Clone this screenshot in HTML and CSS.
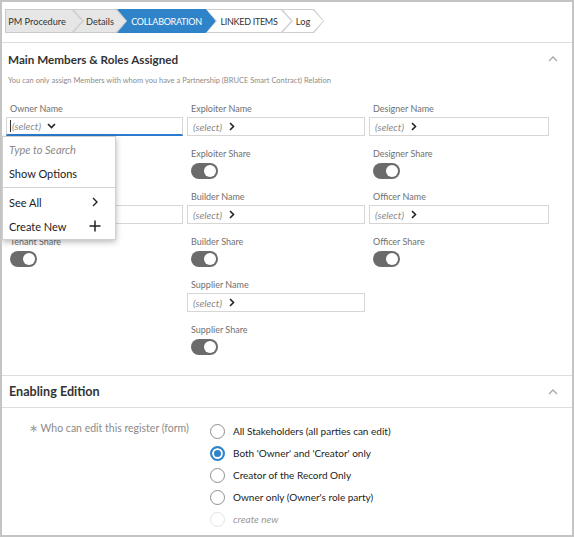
FILE: index.html
```html
<!DOCTYPE html>
<html>
<head>
<meta charset="utf-8">
<link rel="stylesheet" href="styles.css">
</head>
<body>
<div class="frame">
  <nav class="crumbs">
    <div class="crumb crumb-first crumb-done crumb-pm"><span class="crumb-in">PM Procedure</span></div>
    <div class="crumb crumb-done crumb-details"><span class="crumb-in">Details</span></div>
    <div class="crumb crumb-active crumb-collab"><span class="crumb-in crumb-caps">COLLABORATION</span></div>
    <div class="crumb crumb-todo crumb-linked"><span class="crumb-in crumb-caps">LINKED ITEMS</span></div>
    <div class="crumb crumb-todo crumb-log"><span class="crumb-in">Log</span></div>
  </nav>

  <section class="panel panel-members">
    <header class="panel-head head-members">
      <h2>Main Members &amp; Roles Assigned</h2>
      <svg class="collapse" width="10" height="6" viewBox="0 0 10 6"><polyline points="1,5 5,1 9,5" fill="none" stroke="#a8a8a8" stroke-width="1.3"/></svg>
    </header>
    <p class="hint">You can only assign Members with whom you have a Partnership (BRUCE Smart Contract) Relation</p>

    <div class="cols">
      <div class="col">
        <div class="field field-owner">
          <span class="lbl">Owner Name</span>
          <div class="select select-focus">
            <span class="caret"></span><span class="ph">(select)</span>
            <svg class="ico" width="9" height="6" viewBox="0 0 9 6"><polyline points="1,1 4.5,4.5 8,1" fill="none" stroke="#222" stroke-width="1.6"/></svg>
          </div>
          <div class="menu">
            <div class="menu-item menu-search">Type to Search</div>
            <div class="menu-item">Show Options</div>
            <div class="menu-sep"></div>
            <div class="menu-item">See All
              <svg width="12" height="10" viewBox="0 0 12 10"><polyline points="4,1 8,5 4,9" fill="none" stroke="#222" stroke-width="1.4"/></svg>
            </div>
            <div class="menu-item">Create New
              <svg width="12" height="12" viewBox="0 0 12 12"><path d="M6 0.5V11.5M0.5 6H11.5" fill="none" stroke="#222" stroke-width="1.5"/></svg>
            </div>
          </div>
        </div>
        <div class="field covered">
          <span class="lbl lbl-toggle">Owner Share</span>
          <div class="toggle"></div>
        </div>
        <div class="field">
          <span class="lbl covered">Tenant Name</span>
          <div class="select"><span class="ph covered">(select)</span></div>
        </div>
        <div class="field">
          <span class="lbl lbl-toggle">Tenant Share</span>
          <div class="toggle"></div>
        </div>
      </div>

      <div class="col">
        <div class="field">
          <span class="lbl">Exploiter Name</span>
          <div class="select"><span class="ph">(select)</span>
            <svg class="ico" width="6" height="9" viewBox="0 0 6 9"><polyline points="1,1 4.5,4.5 1,8" fill="none" stroke="#222" stroke-width="1.6"/></svg>
          </div>
        </div>
        <div class="field">
          <span class="lbl lbl-toggle">Exploiter Share</span>
          <div class="toggle"></div>
        </div>
        <div class="field">
          <span class="lbl">Builder Name</span>
          <div class="select"><span class="ph">(select)</span>
            <svg class="ico" width="6" height="9" viewBox="0 0 6 9"><polyline points="1,1 4.5,4.5 1,8" fill="none" stroke="#222" stroke-width="1.6"/></svg>
          </div>
        </div>
        <div class="field">
          <span class="lbl lbl-toggle">Builder Share</span>
          <div class="toggle"></div>
        </div>
        <div class="field">
          <span class="lbl">Supplier Name</span>
          <div class="select"><span class="ph">(select)</span>
            <svg class="ico" width="6" height="9" viewBox="0 0 6 9"><polyline points="1,1 4.5,4.5 1,8" fill="none" stroke="#222" stroke-width="1.6"/></svg>
          </div>
        </div>
        <div class="field">
          <span class="lbl lbl-toggle">Supplier Share</span>
          <div class="toggle"></div>
        </div>
      </div>

      <div class="col">
        <div class="field">
          <span class="lbl">Designer Name</span>
          <div class="select"><span class="ph">(select)</span>
            <svg class="ico" width="6" height="9" viewBox="0 0 6 9"><polyline points="1,1 4.5,4.5 1,8" fill="none" stroke="#222" stroke-width="1.6"/></svg>
          </div>
        </div>
        <div class="field">
          <span class="lbl lbl-toggle">Designer Share</span>
          <div class="toggle"></div>
        </div>
        <div class="field">
          <span class="lbl">Officer Name</span>
          <div class="select"><span class="ph">(select)</span>
            <svg class="ico" width="6" height="9" viewBox="0 0 6 9"><polyline points="1,1 4.5,4.5 1,8" fill="none" stroke="#222" stroke-width="1.6"/></svg>
          </div>
        </div>
        <div class="field">
          <span class="lbl lbl-toggle">Officer Share</span>
          <div class="toggle"></div>
        </div>
      </div>
    </div>
  </section>

  <section class="panel panel-edition">
    <header class="panel-head head-edition">
      <h2>Enabling Edition</h2>
      <svg class="collapse" width="10" height="6" viewBox="0 0 10 6"><polyline points="1,5 5,1 9,5" fill="none" stroke="#a8a8a8" stroke-width="1.3"/></svg>
    </header>
    <div class="edit-row">
      <div class="edit-label"><span class="req">&#8727;</span> Who can edit this register (form)</div>
      <div class="radios">
        <div class="radio-row"><span class="radio"></span>All Stakeholders (all parties can edit)</div>
        <div class="radio-row"><span class="radio radio-on"></span>Both 'Owner' and 'Creator' only</div>
        <div class="radio-row"><span class="radio"></span>Creator of the Record Only</div>
        <div class="radio-row"><span class="radio"></span>Owner only (Owner's role party)</div>
        <div class="radio-row radio-row-new"><span class="radio radio-faint"></span>create new</div>
      </div>
    </div>
  </section>
</div>
</body>
</html>
```

FILE: styles.css
```css
* { box-sizing: border-box; }
html, body { margin: 0; background: #fff; }
body { font-family: Lato, "Open Sans", sans-serif; color: #222; }

.frame {
  width: 574px;
  height: 537px;
  border: 2px solid #c4c4c4;
  background: #fff;
  overflow: hidden;
}

/* breadcrumb */
.crumbs {
  display: flex;
  padding: 7px 0 9px 3px;
  border-bottom: 1px solid #dedede;
}
.crumb {
  height: 24px;
  padding: 1px;
  display: flex;
  margin-left: -10px;
  clip-path: polygon(0 0, calc(100% - 10px) 0, 100% 50%, calc(100% - 10px) 100%, 0 100%, 10px 50%);
}
.crumb-in {
  flex: 1;
  display: flex;
  align-items: center;
  justify-content: center;
  padding: 0 10px;
  font-size: 9.2px;
  white-space: nowrap;
  clip-path: polygon(0 0, calc(100% - 10px) 0, 100% 50%, calc(100% - 10px) 100%, 0 100%, 10px 50%);
}
.crumb-caps { font-size: 9px; letter-spacing: -0.3px; }
.crumb-first { margin-left: 0; clip-path: polygon(0 0, calc(100% - 10px) 0, 100% 50%, calc(100% - 10px) 100%, 0 100%); }
.crumb-first .crumb-in { padding: 0 14px 0 0; clip-path: polygon(0 0, calc(100% - 10px) 0, 100% 50%, calc(100% - 10px) 100%, 0 100%); }
.crumb-done { background: #c9c9c9; }
.crumb-done .crumb-in { background: #e6e6e6; color: #333; }
.crumb-active { background: #2f84c9; }
.crumb-active .crumb-in { background: #2f84c9; color: #fff; }
.crumb-todo { background: #cdcdcd; }
.crumb-todo .crumb-in { background: #fff; color: #333; }
.crumb-pm { width: 78px; }
.crumb-details { width: 54px; }
.crumb-collab { width: 99px; }
.crumb-linked { width: 86px; }
.crumb-log { width: 42px; }

/* panels */
.panel-head {
  display: flex;
  align-items: center;
  justify-content: space-between;
  padding: 0 14px 0 6px;
}
.panel-head h2 {
  margin: 0;
  font-size: 11.7px;
  font-weight: 700;
  color: #333;
  line-height: 18px;
}
.head-members { padding-top: 7px; }
.hint {
  margin: 7px 0 0 6px;
  font-size: 7.5px;
  line-height: 12px;
  color: #8c8c8c;
}
.panel-members {
  padding-bottom: 20px;
  border-bottom: 1px solid #dedede;
}

.cols {
  display: grid;
  grid-template-columns: 177px 178px 180px;
  column-gap: 4px;
  margin-top: 15px;
  padding-left: 4px;
  align-items: start;
}
.col {
  display: flex;
  flex-direction: column;
  gap: 11px;
}
.field { position: relative; }
.covered { visibility: hidden; }
.lbl {
  display: block;
  height: 14px;
  line-height: 14px;
  font-size: 9px;
  color: #707070;
  padding-left: 4px;
  margin-bottom: 1px;
  white-space: nowrap;
}
.lbl-toggle { margin-bottom: 2px; }

.select {
  height: 19px;
  border: 1px solid #d6d6d6;
  background: #fff;
  display: flex;
  align-items: center;
  gap: 7px;
  padding-left: 5px;
  font-size: 10px;
  font-style: italic;
  color: #8a8a8a;
}
.select-focus {
  border-bottom: 2px solid #2b7cd0;
  gap: 6px;
  padding-left: 3px;
}
.caret {
  width: 1px;
  height: 12px;
  background: #333;
  margin-right: -5px;
}
.ico { flex: none; }

.toggle {
  width: 27px;
  height: 16px;
  margin-left: 4px;
  border-radius: 8px;
  background: #6b6b6b;
  display: flex;
  align-items: center;
  justify-content: flex-end;
  padding-right: 2px;
}
.toggle::after {
  content: "";
  width: 12px;
  height: 12px;
  border-radius: 50%;
  background: #fff;
}

/* dropdown menu */
.menu {
  position: absolute;
  left: -4px;
  top: 34px;
  width: 114px;
  height: 104px;
  background: #fff;
  border: 1px solid #d0d0d0;
  box-shadow: 0 2px 6px rgba(0, 0, 0, 0.28);
  z-index: 5;
}
.menu-item {
  height: 24px;
  display: flex;
  align-items: center;
  justify-content: space-between;
  padding: 0 14px 0 6px;
  font-size: 11px;
  color: #222;
}
.menu-search { font-style: italic; color: #8a8a8a; }
.menu-sep {
  height: 1px;
  background: #d6d6d6;
  margin: 2px 0 2px;
}

/* edition */
.head-edition {
  height: 32px;
  border-bottom: 1px solid #dedede;
}
.head-edition h2 { padding-left: 1px; font-size: 12.6px; }
.edit-row {
  display: flex;
  padding: 12px 0 0 27px;
}
.edit-label {
  width: 181px;
  flex: none;
  font-size: 10.5px;
  line-height: 14px;
  padding-top: 1px;
  color: #8a8a8a;
  white-space: nowrap;
}
.req { color: #9a9a9a; }
.radios {
  display: flex;
  flex-direction: column;
}
.radio-row {
  height: 22px;
  display: flex;
  align-items: center;
  gap: 8px;
  font-size: 10px;
  color: #222;
}
.radio {
  width: 15px;
  height: 15px;
  border-radius: 50%;
  border: 1px solid #8e8e8e;
  background: #fff;
  flex: none;
}
.radio-on {
  border: 2px solid #2f84c9;
  background: #2f84c9;
  box-shadow: inset 0 0 0 2px #fff;
}
.radio-faint { border-color: #e4e4e4; }
.radio-row-new { font-style: italic; color: #9a9a9a; }
```
